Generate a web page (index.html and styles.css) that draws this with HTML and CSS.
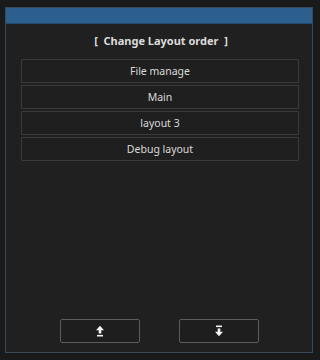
FILE: index.html
```html
<!DOCTYPE html>
<html>
<head>
<meta charset="utf-8">
<link rel="stylesheet" href="styles.css">
</head>
<body>
<div class="window">
  <div class="titlebar"></div>
  <div class="content">
    <div class="heading">[&nbsp; Change Layout order &nbsp;]</div>
    <div class="list">
      <div class="item">File manage</div>
      <div class="item">Main</div>
      <div class="item">layout 3</div>
      <div class="item">Debug layout</div>
    </div>
    <div class="buttons">
      <button class="btn" aria-label="Move up">
        <svg width="10" height="12" viewBox="0 0 10 12"><path d="M5 0.8 L1 5.2 H3.7 V8.6 H6.3 V5.2 H9 Z" fill="#f4f4f4"/><rect x="2" y="9.9" width="6" height="1.6" fill="#f4f4f4"/></svg>
      </button>
      <button class="btn" aria-label="Move down">
        <svg width="10" height="12" viewBox="0 0 10 12"><rect x="2" y="0.5" width="6" height="1.6" fill="#f4f4f4"/><path d="M5 11.2 L1 6.8 H3.7 V3.4 H6.3 V6.8 H9 Z" fill="#f4f4f4"/></svg>
      </button>
    </div>
  </div>
</div>
</body>
</html>
```

FILE: styles.css
```css
html, body {
  margin: 0;
  padding: 0;
  background: #1a1a1a;
  font-family: "Noto Sans", "Open Sans", sans-serif;
}
body {
  padding: 7px 0 0 5px;
}
.window {
  width: 306px;
  height: 344px;
  border: 1px solid #3b4a59;
  background: #202020;
  display: flex;
  flex-direction: column;
}
.titlebar {
  height: 15px;
  background: #2c5e8e;
  border-bottom: 1px solid #244a70;
  flex: none;
}
.content {
  flex: 1;
  display: flex;
  flex-direction: column;
  padding: 9px 13px 9px 15px;
}
.heading {
  text-align: center;
  color: #dcdcdc;
  font-weight: bold;
  font-size: 11px;
  line-height: 16px;
  margin-bottom: 10px;
  white-space: pre;
  padding-left: 2px;
}
.list {
  display: flex;
  flex-direction: column;
  gap: 2px;
}
.item {
  height: 22px;
  border: 1px solid #3a3a3a;
  border-radius: 1px;
  background: #1f1f1f;
  color: #dadada;
  font-size: 10.5px;
  line-height: 22px;
  text-align: center;
}
.buttons {
  margin-top: auto;
  display: flex;
  justify-content: center;
  gap: 39px;
  padding-right: 1px;
}
.btn {
  width: 80px;
  height: 24px;
  border: 1px solid #5c5c5c;
  border-radius: 2px;
  background: #1e1e1e;
  padding: 0;
  display: flex;
  align-items: center;
  justify-content: center;
}
```
